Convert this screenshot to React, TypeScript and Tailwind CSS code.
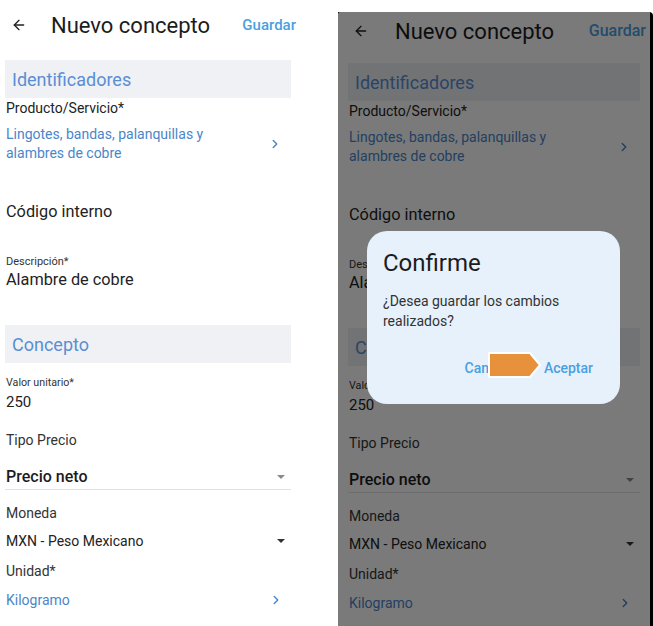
import React from "react";
import { ArrowLeft, ChevronRight } from "lucide-react";

const font = { fontFamily: "Roboto, 'Noto Sans', sans-serif" };

const Caret = ({ color }: { color: string }) => (
  <svg width="8" height="4" viewBox="0 0 8 4" className="mr-[6px]">
    <path d="M0 0h8L4 4z" fill={color} />
  </svg>
);

const Section = ({ title, top }: { title: string; top: string }) => (
  <div className={`${top} h-[38px] bg-[#eff1f4] flex items-center pl-[7px] text-[18px] text-[#5a8ed4]`}>
    {title}
  </div>
);

// one copy of the form screen; `shade` is the right-hand copy under the dialog
const FormScreen = ({ shade }: { shade?: boolean }) => (
  <div className={shade ? "pl-[10px] pr-[10px]" : "pl-[5px] pr-[29px]"}>
    {/* Header */}
    <div className={`${shade ? "h-[38px]" : "h-[50px]"} flex items-center`}>
      <ArrowLeft size={16} strokeWidth={2} className={`text-[#222] ${shade ? "ml-[5px]" : "ml-[6px]"}`} />
      <span className={`${shade ? "ml-[26px]" : "ml-[24px]"} text-[22px] text-[#1c1c1c]`}>Nuevo concepto</span>
      <span
        className={`ml-auto font-medium text-[#4aa0df] ${shade ? "mr-[-6px] text-[16px]" : "mr-[-5px] text-[15px]"}`}
      >
        Guardar
      </span>
    </div>

    <Section title="Identificadores" top={shade ? "mt-[13px]" : "mt-[10px]"} />
    <div className="h-[20px] flex items-center pl-[1px] text-[14px] text-[#222]">Producto/Servicio*</div>
    <div className="mt-[7px] flex items-center pl-[1px]">
      <div className="text-[14px] leading-[19px] text-[#4b86c9]">
        Lingotes, bandas, palanquillas y
        <br />
        alambres de cobre
      </div>
      <ChevronRight size={14} strokeWidth={2.5} className="ml-auto mr-[9px] text-[#4b86c9]" />
    </div>

    <div className="mt-[37px] h-[24px] flex items-center pl-[1px] text-[16.3px] text-[#222]">Código interno</div>
    <div className="mt-[31px] h-[14px] flex items-center pl-[1px] text-[11px] text-[#333]">Descripción*</div>
    <div className="h-[22px] flex items-center pl-[1px] text-[16.3px] text-[#222]">Alambre de cobre</div>

    <Section title="Concepto" top="mt-[34px]" />
    <div className="mt-[12px] h-[16px] flex items-center pl-[1px] text-[10.7px] text-[#333]">Valor unitario*</div>
    <div className="h-[22px] flex items-center pl-[1px] text-[15px] text-[#222]">250</div>

    <div className="mt-[17px] h-[20px] flex items-center pl-[1px] text-[14px] text-[#333]">Tipo Precio</div>
    <div className="mt-[15px] h-[25px] flex items-center pl-[1px] border-b border-[#e2e2e2] text-[16px] font-medium text-[#1c1c1c]">
      Precio neto
      <span className="ml-auto">
        <Caret color="#8a8a8a" />
      </span>
    </div>
    <div className="mt-[13px] h-[20px] flex items-center pl-[1px] text-[14px] text-[#333]">Moneda</div>
    <div className="mt-[8px] h-[20px] flex items-center pl-[1px] text-[14px] text-[#222]">
      MXN - Peso Mexicano
      <span className="ml-auto">
        <Caret color="#333" />
      </span>
    </div>
    <div className="mt-[10px] h-[20px] flex items-center pl-[1px] text-[14px] text-[#333]">Unidad*</div>
    <div className="mt-[9px] h-[20px] flex items-center pl-[1px] text-[14px] text-[#4b86c9]">
      Kilogramo
      <ChevronRight size={14} strokeWidth={2.5} className="ml-auto mr-[8px]" />
    </div>
  </div>
);

export default function App() {
  return (
    <div className="w-[653px] h-[626px] bg-white flex overflow-hidden" style={font}>
      <div className="w-[320px] shrink-0">
        <FormScreen />
      </div>

      <div className="ml-[18px] mt-[12px] w-[315px] h-[614px] bg-black rounded-tr-[4px] pr-[3px]">
        <div className="relative h-full bg-white rounded-tl-[3px] overflow-hidden">
          <FormScreen shade />
          <div className="absolute inset-0 bg-black/[0.52]" />

          {/* Dialog */}
          <div className="absolute left-[29px] top-[219px] w-[253px] h-[173px] rounded-[20px] bg-[#e6f1fb] pl-[16px] pr-[27px]">
            <div className="mt-[17px] text-[24px] leading-[30px] text-[#1c1c1c]">Confirme</div>
            <div className="mt-[13px] text-[14px] leading-[20px] text-[#333]">
              ¿Desea guardar los cambios
              <br />
              realizados?
            </div>
            <div className="mt-[27px] flex items-center justify-end gap-[24px] text-[14px] font-medium text-[#4aa0df]">
              <span>Cancelar</span>
              <span>Aceptar</span>
            </div>
            {/* orange marker over the cancel button */}
            <svg width="54" height="26" viewBox="0 0 54 26" className="absolute left-[121px] top-[121px]">
              <path d="M1 1h41l10 12-10 12H1z" fill="#e8913d" stroke="#fff" strokeWidth="2" />
            </svg>
          </div>
        </div>
      </div>
    </div>
  );
}
